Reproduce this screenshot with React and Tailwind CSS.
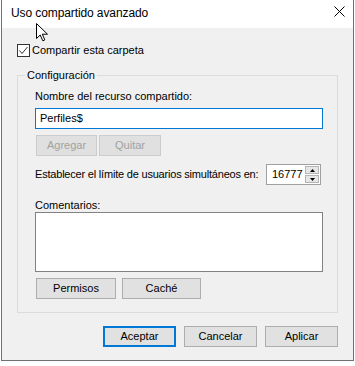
import React from 'react';

const font = { fontFamily: '"Liberation Sans", Arial, sans-serif' };

const Button = ({ label, className = '', disabled = false }) => (
    <button
        type="button"
        disabled={disabled}
        className={`h-[21px] flex items-center justify-center text-[11px] leading-[15px] ${disabled
                ? 'bg-[#e0e0e0] border border-[#cccccc] text-[#a0a0a0]'
                : 'bg-[#e1e1e1] border border-[#adadad] text-black'
            } ${className}`}
    >
        {label}
    </button>
);

const App = () => {
    return (
        <div className="relative w-[355px] h-[366px] bg-white pl-px" style={font}>
            <div className="w-[353px] h-[361px] flex flex-col border-l border-r border-b border-[#707070]">
                {/* Title bar */}
                <div className="h-[28px] shrink-0 bg-white flex items-center justify-between pl-[9px] pr-[8px]">
                    <span className="text-[12px] leading-[15px] text-black pb-[2px] tracking-[-0.1px]">Uso compartido avanzado</span>
                    <svg width="11" height="11" viewBox="0 0 11 11" className="mb-[5px]">
                        <path d="M0.5 0.5 L10.5 10.5 M10.5 0.5 L0.5 10.5" stroke="#000" strokeWidth="1" />
                    </svg>
                </div>

                {/* Body */}
                <div className="flex-1 bg-[#f0f0f0] flex flex-col pt-[16px]">
                    {/* Checkbox */}
                    <div className="h-[13px] flex items-center pl-[15px]">
                        <div className="w-[13px] h-[13px] border border-[#333333] bg-white flex items-center justify-center">
                            <svg width="11" height="11" viewBox="0 0 11 11">
                                <path d="M1.5 5.5 L4 8.5 L9.5 2" fill="none" stroke="#333" strokeWidth="1" />
                            </svg>
                        </div>
                        <span className="ml-[2px] text-[11px] leading-[15px] text-black whitespace-nowrap">Compartir esta carpeta</span>
                    </div>

                    {/* Group box */}
                    <div className="relative mt-[18px] ml-[15px] w-[321px] h-[238px] border border-[#dcdcdc] flex flex-col pl-[17px]">
                        <span className="absolute -top-[8px] left-[7px] px-[2px] bg-[#f0f0f0] text-[11px] leading-[15px] text-black">
                            Configuración
                        </span>

                        <div className="mt-[13px] h-[15px] text-[11px] leading-[15px] text-black whitespace-nowrap">
                            Nombre del recurso compartido:
                        </div>
                        <div className="mt-[4px] w-[288px] h-[21px] border border-[#0078d7] bg-white flex items-center pl-[4px] text-[11px] text-black">
                            Perfiles$
                        </div>

                        <div className="mt-[6px] ml-px flex gap-[2px]">
                            <Button label="Agregar" disabled className="w-[61px]" />
                            <Button label="Quitar" disabled className="w-[62px]" />
                        </div>

                        <div className="mt-[8px] h-[21px] flex items-center">
                            <span className="text-[11px] leading-[15px] text-black whitespace-nowrap tracking-[-0.2px]">
                                Establecer el límite de usuarios simultáneos en:
                            </span>
                            <div className="ml-auto mr-[16px] w-[55px] h-[21px] border border-[#a0a0a0] bg-white flex">
                                <div className="w-[37px] overflow-hidden flex items-center pl-[5px] text-[11px] text-black whitespace-nowrap">
                                    16777
                                </div>
                                <div className="w-[16px] flex flex-col gap-px p-px">
                                    <div className="flex-1 bg-[#e6e6e6] border border-[#b5b5b5] flex items-center justify-center">
                                        <svg width="5" height="3" viewBox="0 0 5 3"><path d="M2.5 0 L5 3 L0 3 Z" fill="#000" /></svg>
                                    </div>
                                    <div className="flex-1 bg-[#e6e6e6] border border-[#b5b5b5] flex items-center justify-center">
                                        <svg width="5" height="3" viewBox="0 0 5 3"><path d="M0 0 L5 0 L2.5 3 Z" fill="#000" /></svg>
                                    </div>
                                </div>
                            </div>
                        </div>

                        <div className="mt-[13px] h-[14px] text-[11px] leading-[14px] text-black">Comentarios:</div>
                        <div className="w-[288px] h-[60px] border border-[#828282] bg-white" />

                        <div className="mt-[6px] ml-px flex gap-[6px]">
                            <Button label="Permisos" className="w-[80px]" />
                            <Button label="Caché" className="w-[79px]" />
                        </div>
                    </div>

                    {/* Dialog buttons */}
                    <div className="mt-[13px] flex justify-end gap-[8px] pr-[15px]">
                        <button
                            type="button"
                            className="w-[73px] h-[21px] bg-[#e1e1e1] border-2 border-[#0078d7] text-[11px] leading-[15px] text-black flex items-center justify-center"
                        >
                            Aceptar
                        </button>
                        <Button label="Cancelar" className="w-[73px]" />
                        <Button label="Aplicar" className="w-[73px]" />
                    </div>
                </div>
            </div>

            {/* Mouse pointer */}
            <svg
                width="13"
                height="19"
                viewBox="0 0 13 19"
                className="absolute left-[36px] top-[23px] pointer-events-none"
            >
                <path
                    d="M0.5 0.5 L0.5 15.5 L4.2 12 L6.8 17.8 L8.8 16.9 L6.3 11.2 L11.5 11.2 Z"
                    fill="#fff"
                    stroke="#000"
                    strokeWidth="1"
                    strokeLinejoin="miter"
                />
            </svg>
        </div>
    );
};

export default App;
